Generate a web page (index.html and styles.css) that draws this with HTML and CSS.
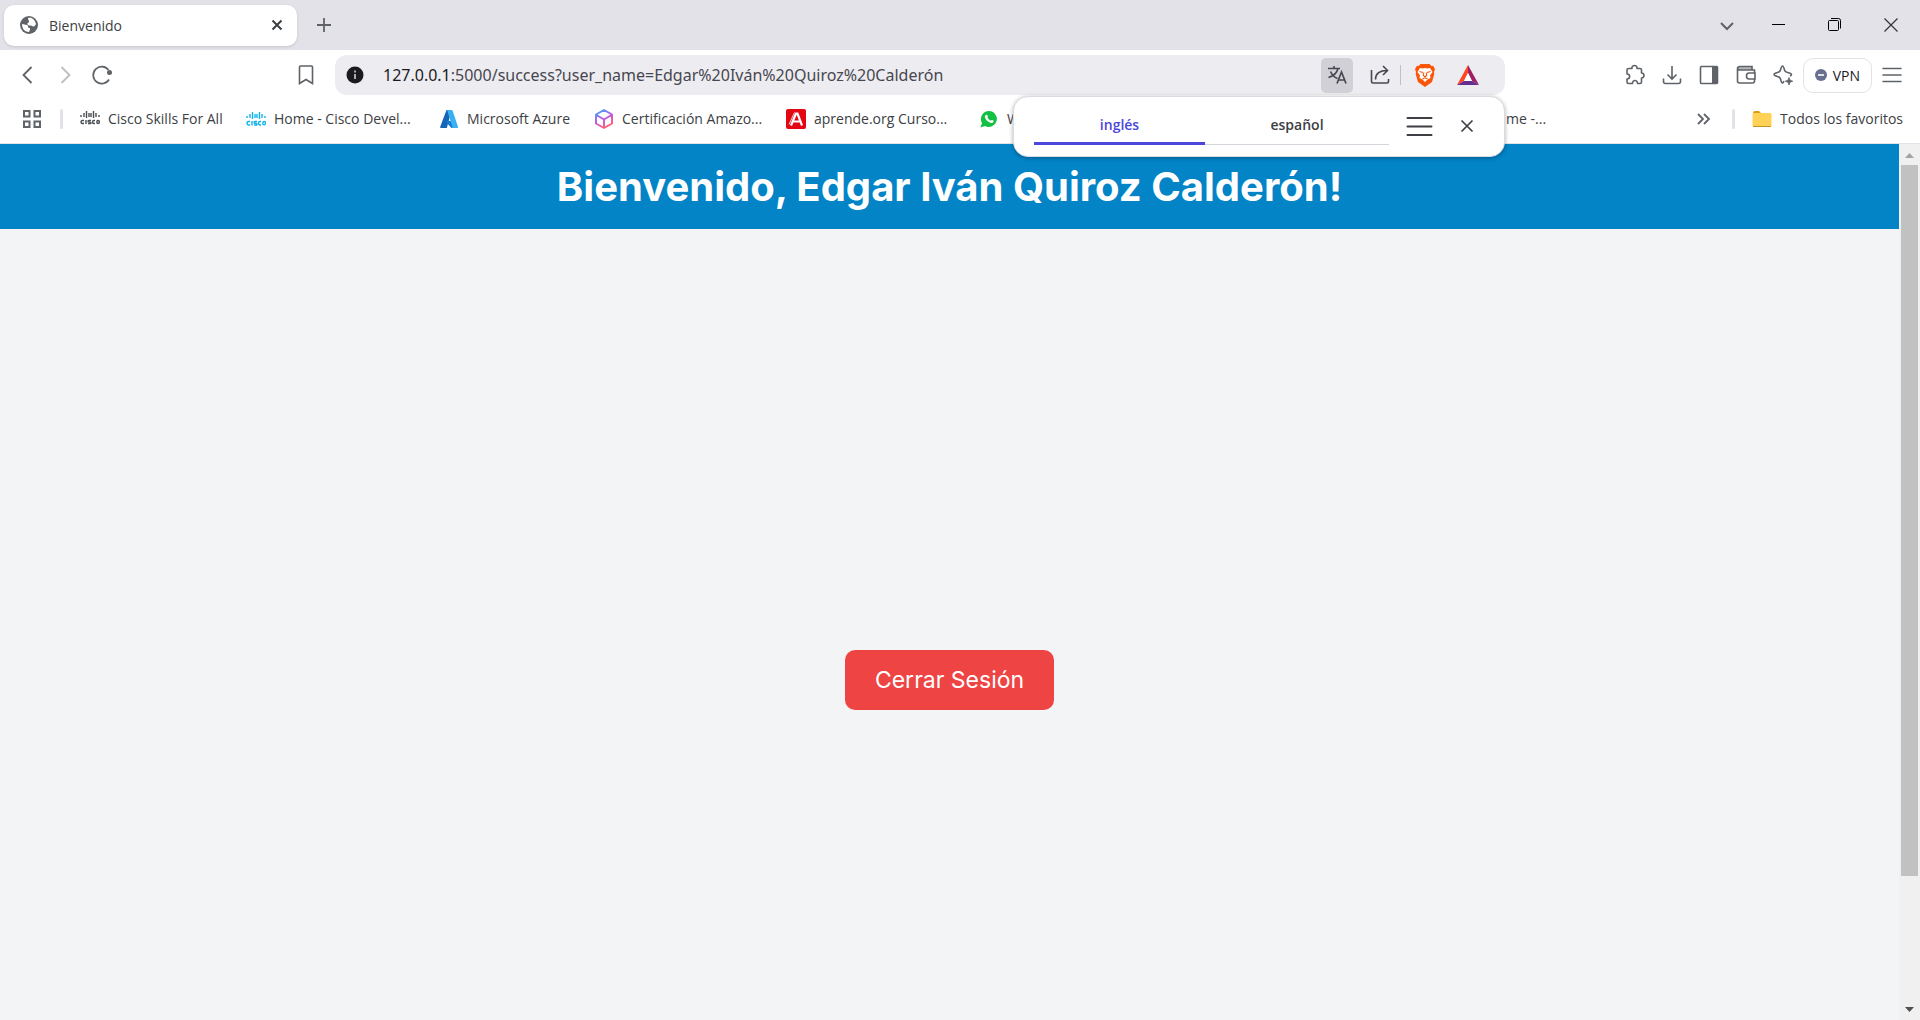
FILE: index.html
```html
<!DOCTYPE html>
<html lang="es">
<head>
<meta charset="utf-8">
<title>Bienvenido</title>
<link rel="stylesheet" href="styles.css">
</head>
<body>
<div class="browser">
  <div class="tabstrip">
    <div class="tab">
      <svg class="i18" viewBox="0 0 18 18"><circle cx="9" cy="9" r="9" fill="#5f6368"/><path d="M2 8c2 0 3 1 5 1 2 1 0 2 2 3 2 0 1 2 0 4-4 0-7-3-7-8zM8 2c4-1 7 2 8 6-1 2-2 3-4 2-1-1-3 0-4-1-2-2 1-2 1-3 0-2-1-2-1-4z" fill="#fff"/></svg>
      <span class="tab-title">Bienvenido</span>
      <button class="icon-btn tab-close" aria-label="Cerrar pestaña"><svg class="i12" viewBox="0 0 12 12"><path d="M1.500 1.500l9 9M10.500 1.500l-9 9" stroke="#3c4043" stroke-width="2"/></svg></button>
    </div>
    <button class="icon-btn new-tab" aria-label="Nueva pestaña"><svg class="i14" viewBox="0 0 14 14"><path d="M7 0v14M0 7h14" stroke="#5f6368" stroke-width="1.800"/></svg></button>
    <div class="window-controls">
      <button class="icon-btn tab-search" aria-label="Buscar pestañas"><svg class="i14" viewBox="0 0 14 14"><path d="M1 5l6 6 6-6" fill="none" stroke="#5f6368" stroke-width="2"/></svg></button>
      <button class="icon-btn" aria-label="Minimizar"><svg class="i14" viewBox="0 0 14 14"><path d="M0 6.500h13" stroke="#000"/></svg></button>
      <button class="icon-btn" aria-label="Restaurar"><svg class="i14" viewBox="0 0 14 14"><rect x=".5" y="2.500" width="10" height="10" rx="1" fill="none" stroke="#000"/><path d="M3 .5h7.500q2 0 2 2v8" fill="none" stroke="#000"/></svg></button>
      <button class="icon-btn" aria-label="Cerrar"><svg class="i14" viewBox="0 0 14 14"><path d="M.5 .5l13 13M13.500 .5l-13 13" stroke="#333" stroke-width="1.200"/></svg></button>
    </div>
  </div>

  <div class="toolbar">
    <div class="nav">
      <button class="icon-btn" aria-label="Atrás"><svg class="i20" viewBox="0 0 20 20"><path d="M13.500 2L5.500 10l8 8" fill="none" stroke="#5f6368" stroke-width="1.800"/></svg></button>
      <button class="icon-btn" aria-label="Adelante"><svg class="i20" viewBox="0 0 20 20"><path d="M6.500 2l8 8-8 8" fill="none" stroke="#bdbdc2" stroke-width="1.800"/></svg></button>
      <button class="icon-btn" aria-label="Recargar"><svg class="i20" viewBox="0 0 20 20"><path d="M17 14.500A8.500 8.500 0 1 1 16.500 5" fill="none" stroke="#5f6368" stroke-width="1.700"/><circle cx="17.500" cy="7.500" r="2.500" fill="#5f6368"/></svg></button>
      <button class="icon-btn bookmark-page" aria-label="Guardar en favoritos"><svg class="i20" viewBox="0 0 20 20"><path d="M4.500 1h11a1 1 0 0 1 1 1v16.500L10 14.500l-6.500 4V2a1 1 0 0 1 1-1z" fill="none" stroke="#5f6368" stroke-width="1.600"/></svg></button>
    </div>
    <div class="omnibox">
      <button class="icon-btn" aria-label="Información del sitio"><svg class="i18" viewBox="0 0 18 18"><circle cx="9" cy="9" r="8.500" fill="#1b1b1f"/><path d="M9 8v5M9 4.500v2" stroke="#d0d0d4" stroke-width="1.600"/></svg></button>
      <div class="url"><span class="host">127.0.0.1</span>:5000/success?user_name=Edgar%20Iván%20Quiroz%20Calderón</div>
      <button class="icon-btn translate" aria-label="Traducir"><svg class="i20" viewBox="0 0 20 20"><path d="M1 3.500h12M7 1v2.500M3.500 6.500q2 5 7 7M11 3.500Q9.500 10 1.500 12.500" fill="none" stroke="#47474f" stroke-width="1.600"/><path d="M10 18.500L14.500 7 19 18.500M11.500 15h6" fill="none" stroke="#47474f" stroke-width="1.700"/></svg></button>
      <button class="icon-btn" aria-label="Compartir"><svg class="i20" viewBox="0 0 20 20"><path d="M1.500 5v11.500q0 1.500 1.500 1.500h14q1.500 0 1.500-1.500V14M5.500 14.500C5.500 8 10 5.500 17.500 5.500M13 1l4.500 4.500L13 10" fill="none" stroke="#47474f" stroke-width="1.600"/></svg></button>
      <span class="omni-sep"></span>
      <button class="icon-btn" aria-label="Brave Shields"><svg class="brave" viewBox="0 0 20 23"><path d="M5.500 0h9l2 2 1.500-.3L20 5l-1 3 .3 2-2.300 8L10 23l-7-5L.7 10 1 8 0 5l2-3.300 1.500.3z" fill="#fb5607"/><path d="M5 4l2.500.5L10 4l2.500.5L15 4l2.500 4-2.500 3.500.5 2.500-3 1.500L10 18l-2.500-2.500-3-1.500.5-2.500L2.500 8z" fill="#fff"/><path d="M4.500 7.500l3.500 1M15.500 7.500l-3.500 1M8.800 8.500L8.300 11.500 10 12.800l1.700-1.300-.5-3M7.500 15l2.500-1.200 2.500 1.200" fill="none" stroke="#fb5607" stroke-width="1.100"/></svg></button>
      <button class="icon-btn" aria-label="Brave Rewards"><svg class="bat" viewBox="0 0 22 20"><path d="M11 0L0 20l7-4 4-8z" fill="#ff4724"/><path d="M11 0l11 20-7-4-4-8z" fill="#9e1f63"/><path d="M0 20h22l-7-4H7z" fill="#662d91"/><path d="M11 8l4 8H7z" fill="#fff"/></svg></button>

      <div class="translate-popup">
        <div class="languages">
          <button class="language selected">inglés</button>
          <button class="language">español</button>
        </div>
        <button class="icon-btn" aria-label="Opciones de traducción"><svg class="i26" viewBox="0 0 26 26"><path d="M1.500 4h24M1.500 12.500h24M1.500 21h24" stroke="#3e3e44" stroke-width="2" stroke-linecap="round"/></svg></button>
        <button class="icon-btn" aria-label="Cerrar traducción"><svg class="i12" viewBox="0 0 12 12"><path d="M.5-.5l11 11M11.500-.5l-11 11" stroke="#3e3e44" stroke-width="1.700"/></svg></button>
      </div>
    </div>
    <div class="actions">
      <button class="icon-btn" aria-label="Extensiones"><svg class="i20" viewBox="0 0 20 20"><path d="M3.500 3.500H7c-.8-4 5.800-4 5 0h3q1.500 0 1.500 1.500v3c3.300.3 3.300 4.700 0 5v4q0 1.500-1.500 1.500h-2.500c.3-4-5.300-4-5 0h-4Q2 18.500 2 17v-3c3.500 0 3.500-5 0-5V5q0-1.500 1.500-1.500z" fill="none" stroke="#5f6368" stroke-width="1.600" stroke-linejoin="round"/></svg></button>
      <button class="icon-btn" aria-label="Descargas"><svg class="i20" viewBox="0 0 20 20"><path d="M10 1v13M5.500 9.500L10 14l4.500-4.500M1.500 13.500v3q0 2 2 2h13q2 0 2-2v-3" fill="none" stroke="#5f6368" stroke-width="1.600"/></svg></button>
      <button class="icon-btn" aria-label="Panel lateral"><svg class="i20" viewBox="0 0 20 20"><rect x="1.500" y="1.500" width="17" height="17" rx="1" fill="none" stroke="#5f6368" stroke-width="1.600"/><path d="M13 1.500h5.500v17H13z" fill="#5f6368"/></svg></button>
      <button class="icon-btn" aria-label="Cartera"><svg class="i20" viewBox="0 0 20 20"><path d="M1.500 4q0-2.500 2.500-2.500h12l1 3.500H4q-2.500 0-2.500-1z" fill="#b5b6ba"/><path d="M18.500 8V5H4Q1.500 5 1.500 3.500 1.500 1.500 4 1.500h12V5M1.500 3.500V16q0 2 2 2h13q2 0 2-2v-2M19 8h-6q-2.500 0-2.500 3t2.500 3h6z" fill="none" stroke="#5f6368" stroke-width="1.600"/></svg></button>
      <button class="icon-btn" aria-label="Leo"><svg class="i20" viewBox="0 0 20 20"><path d="M17 11q1.500-.7 1.500-1.500 0-1.200-4-2-2.500-.5-3-2.500Q10.500 1 9.500 1t-2 4Q7 7 4.500 7.500 1 8.300 1 9.500q0 1 3.500 2 2.500.5 3 2.500 1 4 2 4 .8 0 1.500-2" fill="none" stroke="#5f6368" stroke-width="1.600"/><path d="M16 12.500l1 2.700 2.700 1-2.700 1-1 2.700-1-2.700-2.700-1 2.700-1z" fill="#5f6368" stroke="#5f6368" stroke-width=".8"/></svg></button>
      <button class="vpn"><svg class="i12" viewBox="0 0 12 12"><circle cx="6" cy="6" r="6" fill="#68708f"/><path d="M3 6h6" stroke="#fff" stroke-width="1.600"/></svg>VPN</button>
      <button class="icon-btn" aria-label="Menú"><svg class="i20" viewBox="0 0 20 20"><path d="M1 3.500h18M1 10h18M1 16.500h18" stroke="#5f6368" stroke-width="1.500" stroke-linecap="round"/></svg></button>
    </div>
  </div>

  <nav class="bookmarks">
    <button class="icon-btn" aria-label="Grupos"><svg class="i20" viewBox="0 0 20 20"><path d="M2 2h5.500v5.500H2zM12.500 2H18v5.500h-5.500zM2 12.500h5.500V18H2zM12.500 12.500H18V18h-5.500z" fill="none" stroke="#5f6368" stroke-width="2"/></svg></button>
    <span class="bar-sep"></span>
    <div class="bookmark-list">
      <a class="bookmark" href="#"><svg class="i20 cisco-dark" viewBox="0 0 20 20"><path d="M1 6v2M4 4v4M6.500 2v7M9 4v4M11 4v4M13.500 2v7M16 4v4M19 6v2M4 11.500H2.500Q1 11.500 1 13t1.500 1.500H4M6 11v4M11 11.500H9q-1 0-1 .8t1.500.8 1.500.8-1 .7H8M15 11.500h-1q-1.500 0-1.500 1.500t1.500 1.500h1M16.800 13a1.300 1.500 0 1 0 2.600 0 1.300 1.500 0 1 0-2.600 0"/></svg>Cisco Skills For All</a>
      <a class="bookmark" href="#"><svg class="i20 cisco-blue" viewBox="0 0 20 20"><path d="M1 7v2M4 5v4M6.500 3v7M9 5v4M11 5v4M13.500 3v7M16 5v4M19 7v2M4 12.500H2.500Q1 12.500 1 14.200T2.500 16H4M6 12v4.500M11 12.500H9q-1 0-1 .9t1.500.9 1.500.9-1 .8H8M15 12.500h-1q-1.500 0-1.500 1.700T14 16h1M16.800 14.200a1.300 1.700 0 1 0 2.600 0 1.300 1.700 0 1 0-2.600 0"/></svg>Home - Cisco Devel...</a>
      <a class="bookmark" href="#"><svg class="i20" viewBox="0 0 20 20"><path d="M7.500 1h5L8 18.500q-.3.500-1 .5H2q-1.200 0-.8-1.200z" fill="#1565b8"/><path d="M6 12h10l2 7h-5.500z" fill="#1479d4"/><path d="M8 1h4.500q.8 0 1 .6L19 17.800q.4 1.200-.8 1.200h-5.500q1-.3.600-1.500z" fill="#38b1f0"/></svg>Microsoft Azure</a>
      <a class="bookmark" href="#"><svg class="i20" viewBox="0 0 20 20"><defs><linearGradient id="aws" x1="0" y1="0" x2=".5" y2="1"><stop offset="0" stop-color="#22b7f2"/><stop offset=".5" stop-color="#b45cf5"/><stop offset="1" stop-color="#ff5f7a"/></linearGradient></defs><path d="M10 1l8 4.500v9L10 19l-8-4.500v-9zM2.500 6l7.500 4.500L17.500 6M10 10.500V19" fill="none" stroke="url(#aws)" stroke-width="2" stroke-linejoin="round"/></svg>Certificación Amazo...</a>
      <a class="bookmark" href="#"><svg class="i20" viewBox="0 0 20 20"><rect width="20" height="20" rx="2" fill="#e30613"/><path d="M5 16.500L10 4.500h1.500l4.500 12M7.500 12.500h7" fill="none" stroke="#fff" stroke-width="2.200"/><path d="M3 15.500L8.500 3.500" stroke="#fff" stroke-width=".8"/></svg>aprende.org Curso...</a>
      <a class="bookmark" href="#"><svg class="i20" viewBox="0 0 20 20"><path d="M10 2a8 8 0 1 1-4 15L1.500 18.500 3 14A8 8 0 0 1 10 2z" fill="#12c143"/><path d="M7 6q1-.6 1.500.5.8 1.500 0 2 1 2.300 3.300 3.300.8-1.300 2-.5 1.500.8.700 1.700-1.500 2-4.700 0-3.500-2-4-5Q5.700 6.700 7 6z" fill="#fff"/></svg>W</a>
      <a class="bookmark last" href="#">me -...</a>
    </div>
    <button class="icon-btn" aria-label="Más favoritos"><svg class="i14" viewBox="0 0 14 14"><path d="M2 2l5 5-5 5M8 2l5 5-5 5" fill="none" stroke="#5f6368" stroke-width="1.800"/></svg></button>
    <span class="bar-sep end"></span>
    <a class="bookmark all" href="#"><svg class="i20" viewBox="0 0 20 20"><path d="M1 4q0-2 2-2h4l2 2v5H1z" fill="#dd9c12"/><rect x=".5" y="4" width="19" height="14" rx="1.500" fill="#ffd257"/><path d="M1 17.500h18" stroke="#c99224"/></svg>Todos los favoritos</a>
  </nav>

  <div class="viewport">
    <div class="page">
      <header class="banner"><h1>Bienvenido, Edgar Iván Quiroz Calderón!</h1></header>
      <main class="content"><button class="logout">Cerrar Sesión</button></main>
    </div>
    <div class="scrollbar">
      <svg class="arrow" viewBox="0 0 21 21"><path d="M6 14l4.500-5 4.500 5z" fill="#a3a3a3"/></svg>
      <div class="track"><div class="thumb"></div></div>
      <svg class="arrow" viewBox="0 0 21 21"><path d="M6 8l4.500 5L15 8z" fill="#505050"/></svg>
    </div>
  </div>
</div>
</body>
</html>
```
FILE: styles.css
```css
* { box-sizing: border-box; }
body { margin: 0; font-family: "Open Sans", "Noto Sans", sans-serif; font-size: 14px; color: #3c4043; }
button { font: inherit; color: inherit; border: 0; padding: 0; background: none; cursor: pointer; }
a { color: inherit; text-decoration: none; }
svg { display: block; flex: none; overflow: visible; }

.browser { display: flex; flex-direction: column; height: 100vh; background: #fff; overflow: hidden; }
.icon-btn { display: flex; align-items: center; justify-content: center; flex: none; }
.i12 { width: 12px; height: 12px; }
.i14 { width: 14px; height: 14px; }
.i18 { width: 18px; height: 18px; }
.i20 { width: 20px; height: 20px; }
.i26 { width: 26px; height: 26px; }
.brave { width: 20px; height: 23px; }
.bat { width: 22px; height: 20px; }

.tabstrip { display: flex; align-items: center; flex: none; height: 50px; padding: 0 4px; background: #e3e2e8; }
.tab { display: flex; align-items: center; gap: 11px; width: 293px; height: 41px; padding: 0 14px 0 16px; border-radius: 10px; background: #fff; box-shadow: 0 1px 3px #00000020; }
.tab-close { margin-left: auto; }
.new-tab { margin-left: 20px; }
.window-controls { display: flex; gap: 42px; margin-left: auto; padding-right: 18px; }
.tab-search { margin-right: -4px; }

.toolbar { display: grid; grid-template-columns: 335px minmax(0, 1fr) 415px; flex: none; height: 50px; align-items: center; }
.nav { display: flex; align-items: center; gap: 17px; padding: 0 19px 0 18px; }
.bookmark-page { margin-left: auto; }
.omnibox { position: relative; display: flex; align-items: center; height: 40px; padding: 0 26px 0 11px; border-radius: 12px; background: #edecf1; }
.url { flex: 1; margin-left: 19px; font-family: "Noto Sans", sans-serif; font-size: 16px; line-height: 24px; white-space: nowrap; color: #47474f; overflow: hidden; }
.host { color: #1b1b1f; }
.translate { width: 32px; height: 35px; margin-right: 17px; border-radius: 5px; background: #d1d0d6; }
.omni-sep { width: 1px; height: 20px; margin: 0 14px 0 10px; background: #c0c0c6; }
.omnibox .brave { margin-right: 22px; }

.translate-popup { position: absolute; z-index: 2; top: 41px; right: 0; display: flex; align-items: center; width: 492px; height: 61px; padding: 0 31px 0 20px; border-radius: 15px; background: #fff; border: 1px solid #dcdbe3; box-shadow: 0 1px 4px #00000050; }
.languages { display: flex; flex: 1; align-self: flex-end; margin: 0 17px 11px 0; border-bottom: 1px solid #d5d5dd; }
.language { width: 171px; height: 38px; margin-bottom: -1px; border-bottom: 3px solid transparent; font-weight: 600; }
.language + .language { width: 184px; }
.language.selected { color: #4c46dc; border-bottom-color: #4c46dc; }
.translate-popup .i26 { margin-right: 29px; }

.actions { display: flex; align-items: center; justify-content: flex-end; gap: 17px; padding-right: 18px; }
.vpn { display: flex; align-items: center; gap: 6px; height: 35px; margin: 0 -7px; padding: 0 11px; border: 1px solid #e3e2e8; border-radius: 10px; color: #1b1b1f; }

.bookmarks { display: flex; align-items: center; flex: none; height: 44px; padding: 0 17px 6px 22px; border-bottom: 1px solid #e3e2e8; }
.bar-sep { flex: none; width: 3px; height: 20px; margin: 0 17px 0 18px; background: #e3e2e8; border-radius: 2px; }
.bar-sep.end { margin: 0 17px 0 22px; }
.bookmark-list { display: grid; grid-template-columns: 166px 193px 155px 192px 193px 1fr; flex: 1; grid-auto-flow: column; }
.bookmark { display: flex; align-items: center; gap: 8px; line-height: 20px; white-space: nowrap; }
.bookmark.last { margin-right: 150px; }
.cisco-dark, .cisco-blue { fill: none; stroke: #4b4e52; stroke-width: 1.4; }
.cisco-blue { stroke: #0fb5ea; }

.viewport { display: flex; flex: 1; min-height: 0; }
.page { display: flex; flex-direction: column; flex: 1; background: #f3f4f6; font-family: Inter, "Open Sans", sans-serif; }
.banner { padding: 20px; background: #0284c7; color: #fff; text-align: center; }
.banner h1 { margin: 0; font-size: 40px; line-height: 45px; font-weight: 700; }
.content { display: flex; flex: 1; align-items: center; justify-content: center; padding-top: 111px; }
.logout { padding: 12px 30px; border-radius: 10px; background: #ef4444; color: #fff; font-size: 23px; line-height: 36px; }
.scrollbar { display: flex; flex-direction: column; width: 21px; background: #f0f0f0; }
.arrow { width: 21px; height: 21px; }
.track { flex: 1; padding: 0 2px; }
.thumb { height: 85.3%; background: #c1c1c1; }
```
